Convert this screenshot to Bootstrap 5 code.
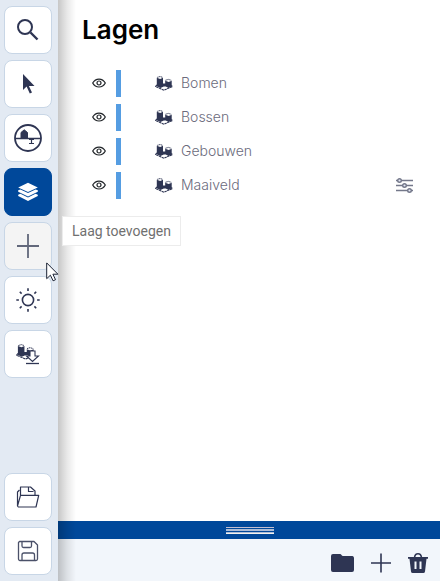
<!DOCTYPE html>
<html lang="nl">
<head>
<meta charset="utf-8">
<meta name="viewport" content="width=device-width, initial-scale=1">
<title>Lagen</title>
<link href="https://cdn.jsdelivr.net/npm/bootstrap@5.3.0/dist/css/bootstrap.min.css" rel="stylesheet">
<style>
  :root { --ink: #2e3553; --blue: #00489a; }
  body { font-family: Inter, "Liberation Sans", sans-serif; color: var(--ink); background: #fff; }
  svg { display: block; }
  .app { padding: 0 1px 1px 0; }
  .tool-rail { width: 58px; padding: 6px 4px; gap: 6px; background: #e3eaf3; }
  .tool-btn { --bs-btn-padding-x: 0; --bs-btn-padding-y: 0; width: 48px; height: 48px; border: 1px solid #c8d6e6; border-radius: 8px;
    background: #fff; color: var(--ink); }
  .tool-btn.chosen { background: var(--blue); border-color: var(--blue); color: #fff; }
  .tool-btn.hovered { background: #f4f4f4; }
  .rail-shade { left: 0; width: 18px; background: linear-gradient(90deg, rgba(0,0,0,.22), rgba(0,0,0,.09) 50%, rgba(0,0,0,0)); pointer-events: none; }
  .panel-body { padding: 14px 24px 0; }
  .panel-title { font-size: 26px; line-height: 32px; font-weight: 600; color: #000; margin-bottom: 24px; }
  .layers { gap: 7px; }
  .layer { height: 27px; padding-left: 10px; padding-right: 3px; }
  .layer-bar { width: 5px; background: #559de2; margin-left: 10px; margin-right: 34px; }
  .layer-name { font-size: 14px; line-height: 20px; font-weight: 300; color: #6b6b7c; margin-left: 8px; padding-bottom: 1px; }
  .eye-btn { margin-bottom: 1px; }
  .splitter { height: 18px; background: var(--blue); }
  .grip { width: 48px; height: 7px; margin-left: 2px; background: linear-gradient(#c3bed0 0 1px, var(--blue) 1px 2px, #abbcd8 2px 4px, var(--blue) 4px 5px, #abbcd8 5px 6px, #f3f2ee 6px); }
  .panel-foot { height: 42px; background: #f2f6fb; padding: 5px 11px 0 0; gap: 15px; }
  .tip { left: 62px; top: 216px; padding: 4px 9px; font: 14px/20px Roboto, sans-serif; color: #707070; background: #fff; border: 1px solid #ececec; }
  .pointer { left: 46px; top: 262px; }
</style>
</head>
<body>
<svg class="d-none" aria-hidden="true">
  <symbol id="eye" viewBox="0 0 14 10"><g fill="none" stroke="currentColor" stroke-width="1.200"><path d="M.7 5C3.600-.3 10.400-.3 13.300 5 10.400 10.300 3.600 10.300.7 5z"/><circle cx="7" cy="5" r="2"/></g></symbol>
  <symbol id="city" viewBox="0 0 18 15"><path d="M2 8.800.5 10.500 9 14.200l8.500-3.700-1.200-1" fill="none" stroke="currentColor" stroke-width="1.100" stroke-dasharray="2.500 .5"/><path d="M1.800 1.700V10.300L5.500 12l3.300-1.500h2L13.500 12l3.200-1.500V4.800L13.700 6 10.200 4.800V7.500H8V1.700L5.200 2.900z" fill="currentColor"/><path d="M2.200 1.400 5 .5l2.800.9M10.400 4.300 13.300 3.400l3.100.9" fill="none" stroke="currentColor" stroke-width=".9" stroke-dasharray="1.500 .5"/></symbol>
</svg>

<div class="app d-flex vh-100 position-relative">
  <nav class="tool-rail d-flex flex-column flex-shrink-0" aria-label="Gereedschap">
    <button type="button" class="btn tool-btn d-flex align-items-center justify-content-center" aria-label="Zoeken">
      <svg width="24" height="24" viewBox="0 0 24 24" fill="none" stroke="currentColor"><circle cx="9" cy="9" r="7" stroke-width="2"/><path d="M14.500 14.500 21.500 21.500" stroke-width="2.400"/></svg>
    </button>
    <button type="button" class="btn tool-btn d-flex align-items-center justify-content-center" aria-label="Selecteren">
      <svg width="24" height="24" viewBox="0 0 24 24" fill="currentColor"><path d="M7 2v16l3.600-3.400 3.200 6.800 2.200-1-3.100-6.400H18.500z"/></svg>
    </button>
    <button type="button" class="btn tool-btn d-flex align-items-center justify-content-center" aria-label="Doorsnede">
      <svg width="30" height="30" viewBox="0 0 30 30" fill="none" stroke="currentColor"><circle cx="15" cy="15" r="13" stroke-width="1.800"/><path d="M2 15.500h26" stroke-width="1.500"/><path d="M8 15V9.500l3.200-2.700 3.300 2.700V15z" fill="currentColor"/><path d="M18.500 15.500v4.500M16 20.500h5M16 16.500h5" stroke-width="1.200"/></svg>
    </button>
    <button type="button" class="btn tool-btn chosen d-flex align-items-center justify-content-center" aria-label="Lagen">
      <svg width="20" height="20" viewBox="0 0 20 20" fill="currentColor"><path d="M10 .7 19.800 5.400 10 10.100.2 5.400z"/><path d="M.2 8.300 2.400 7.400 10 11.100l7.600-3.700 2.200.9v1.400L10 14.400.2 9.700z"/><path d="M.2 12.700l2.200-1L10 15.400l7.600-3.700 2.200 1v1.200L10 18.900.2 13.900z"/></svg>
    </button>
    <button type="button" class="btn tool-btn hovered d-flex align-items-center justify-content-center" aria-label="Laag toevoegen" aria-describedby="tip-add">
      <svg width="22" height="24" viewBox="0 0 22 24" stroke="#62687b" stroke-width="1.800"><path d="M11 0v24M0 12h22"/></svg>
    </button>
    <button type="button" class="btn tool-btn d-flex align-items-center justify-content-center" aria-label="Zon">
      <svg width="24" height="24" viewBox="0 0 24 24" fill="none" stroke="currentColor" stroke-width="1.600"><circle cx="12" cy="12" r="5.600"/><path d="M12 .3v2.600M12 21.100v2.600M.3 12h2.600M21.100 12h2.600M3.800 3.800l1.800 1.800M18.400 18.400l1.800 1.800M3.800 20.200l1.800-1.800M18.400 5.600l1.800-1.800"/></svg>
    </button>
    <button type="button" class="btn tool-btn d-flex align-items-center justify-content-center" aria-label="Downloaden">
      <svg width="24" height="24" viewBox="0 0 24 24"><use href="#city" x="0" y="2" width="19" height="16"/><path d="M14 9h5v5h3.500L16.500 19.500l-6-5.500H14z" fill="#fff" stroke="currentColor" stroke-width="1.100"/><path d="M10 21.500h13" stroke="currentColor" stroke-width="1.300"/></svg>
    </button>
    <button type="button" class="btn tool-btn mt-auto d-flex align-items-center justify-content-center" aria-label="Openen">
      <svg width="24" height="24" viewBox="0 0 24 24" fill="none" stroke="currentColor" stroke-width="1.200" stroke-linejoin="round"><path d="M4.500 10V2h10l4.500 4v4M12.500 2.500v4h5"/><path d="M1.500 21V7l2-2M1.500 21l3-10.700h18.200L20 22H2.300z"/></svg>
    </button>
    <button type="button" class="btn tool-btn d-flex align-items-center justify-content-center" aria-label="Opslaan">
      <svg width="22" height="22" viewBox="0 0 22 22" fill="none" stroke="#4b5169" stroke-width="1.300" stroke-linejoin="round"><path d="M2.500 1.500h14.500l3.500 3.500v14a1.500 1.500 0 0 1-1.500 1.500H3a1.500 1.500 0 0 1-1.500-1.500V2.500z"/><path d="M5 1.500V6q0 1.500 1.500 1.500h6.500q1.500 0 1.500-1.500V1.500M5 20.500V15q0-2 2-2h8.500q2 0 2 2v5.500"/></svg>
    </button>
  </nav>

  <main class="flex-grow-1 d-flex flex-column position-relative">
    <div class="panel-body flex-grow-1">
      <h1 class="panel-title">Lagen</h1>
      <ul class="layers list-unstyled d-flex flex-column mb-0">
        <li class="layer d-flex align-items-center">
          <button type="button" class="btn eye-btn p-0 border-0" aria-label="Bomen tonen"><svg width="14" height="10"><use href="#eye"/></svg></button>
          <span class="layer-bar align-self-stretch"></span><svg width="18" height="15"><use href="#city"/></svg><span class="layer-name">Bomen</span>
        </li>
        <li class="layer d-flex align-items-center">
          <button type="button" class="btn eye-btn p-0 border-0" aria-label="Bossen tonen"><svg width="14" height="10"><use href="#eye"/></svg></button>
          <span class="layer-bar align-self-stretch"></span><svg width="18" height="15"><use href="#city"/></svg><span class="layer-name">Bossen</span>
        </li>
        <li class="layer d-flex align-items-center">
          <button type="button" class="btn eye-btn p-0 border-0" aria-label="Gebouwen tonen"><svg width="14" height="10"><use href="#eye"/></svg></button>
          <span class="layer-bar align-self-stretch"></span><svg width="18" height="15"><use href="#city"/></svg><span class="layer-name">Gebouwen</span>
        </li>
        <li class="layer d-flex align-items-center">
          <button type="button" class="btn eye-btn p-0 border-0" aria-label="Maaiveld tonen"><svg width="14" height="10"><use href="#eye"/></svg></button>
          <span class="layer-bar align-self-stretch"></span><svg width="18" height="15"><use href="#city"/></svg><span class="layer-name">Maaiveld</span>
          <button type="button" class="btn p-0 border-0 ms-auto" aria-label="Instellingen">
            <svg width="17" height="15" viewBox="0 0 17 15" fill="#e4e8f6" stroke="#74788a" stroke-width="1.400"><path d="M0 2.500h17M0 7.500h17M0 12.500h17"/><circle cx="3.500" cy="2.500" r="1.800"/><circle cx="8.500" cy="7.500" r="1.800"/><circle cx="13.500" cy="12.500" r="1.800"/></svg>
          </button>
        </li>
      </ul>
    </div>
    <div class="splitter d-flex align-items-center justify-content-center" role="separator" aria-orientation="horizontal"><span class="grip"></span></div>
    <div class="panel-foot d-flex align-items-center justify-content-end">
      <button type="button" class="btn p-0 border-0" aria-label="Map">
        <svg width="25" height="20" viewBox="0 0 25 20" fill="#2e3553"><path d="M1 3a2 2 0 0 1 2-2h7q1 0 1.500 1t1.500 1h9.500A2 2 0 0 1 24 5v12a2 2 0 0 1-2 2H3a2 2 0 0 1-2-2z"/></svg>
      </button>
      <button type="button" class="btn p-0 border-0" aria-label="Toevoegen">
        <svg width="22" height="20" viewBox="0 0 22 20" stroke="#2e3553" stroke-width="1.600"><path d="M11 .5v19M1 10h20"/></svg>
      </button>
      <button type="button" class="btn p-0 border-0" aria-label="Verwijderen">
        <svg width="22" height="22" viewBox="0 0 22 22"><path d="M7.500 5.500Q8 1.800 11 1.800t3.500 3.700" fill="none" stroke="#2e3553" stroke-width="1.600"/><path d="M1 5h20v1.800h-1.500L18 19.500q-.2 1.500-1.700 1.500H5.700Q4.200 21 4 19.500L2.500 6.800H1z" fill="#2e3553"/><path d="M8.500 9.500v7.500M13.500 9.500v7.500" stroke="#f2f6fb" stroke-width="2"/></svg>
      </button>
    </div>
    <div class="rail-shade position-absolute top-0 bottom-0"></div>
  </main>

  <div class="tip position-absolute text-nowrap" id="tip-add" role="tooltip">Laag toevoegen</div>
  <svg class="pointer position-absolute" width="13" height="20" viewBox="0 0 13 20" aria-hidden="true"><path d="M.7.9v15.800l3.700-3.500 2.700 5.600 2.400-1.100-2.600-5.500h5z" fill="#fff" stroke="#1b2233" stroke-width="1"/></svg>
</div>
<script src="https://cdn.jsdelivr.net/npm/bootstrap@5.3.0/dist/js/bootstrap.bundle.min.js"></script>
</body>
</html>
